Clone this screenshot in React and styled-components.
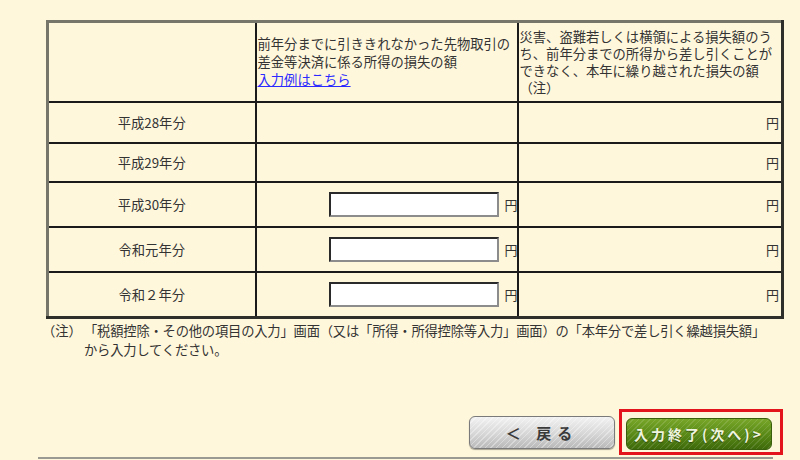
import React from 'react';
import styled, { createGlobalStyle, css } from 'styled-components';

const GlobalStyle = createGlobalStyle`
  html, body {
    margin: 0;
    padding: 0;
    background: #fff7dc;
  }
  body {
    font-family: "Noto Sans CJK JP", "Noto Sans", sans-serif;
    font-size: 13.3px;
    color: #333;
  }
`;

const Page = styled.div`
  width: 800px;
  height: 460px;
  overflow: hidden;
  padding-top: 20px;
  box-sizing: border-box;
`;

const Table = styled.table`
  margin-left: 46px;
  width: 735px;
  border-collapse: collapse;
  table-layout: fixed;
  border-style: solid;
  border-width: 3px;
  border-color: #76766a #2e2e2a #2e2e2a #76766a;
`;

const Cell = styled.td`
  border: 2px solid #1a1a1a;
  padding: 0 2px 0 2px;
  line-height: 17px;
  vertical-align: middle;
  height: ${(p) => p.h}px;
  text-align: ${(p) => p.align || 'left'};
  ${(p) =>
    p.head &&
    css`
      padding: 0 3px 0 1px;
    `}
  ${(p) =>
    p.amount &&
    css`
      padding-right: 0;
    `}
`;

const LinkedHead = styled.div`
  line-height: 18px;
`;

const Link = styled.a`
  color: #2b2bff;
  text-decoration: underline;
`;

const AmountWrap = styled.div`
  display: flex;
  align-items: center;
  justify-content: flex-end;
  gap: 5px;
  margin-right: -1px;
`;

const Input = styled.input`
  width: 170px;
  height: 25px;
  box-sizing: border-box;
  border-style: solid;
  border-width: 2px;
  border-color: #2a2a2a #8c8c8c #8c8c8c #2a2a2a;
  background: #fff;
  padding: 0 4px;
  font: inherit;
`;

const Yen = styled.span`
  font-size: 13px;
`;

const Note = styled.div`
  display: flex;
  margin: 2px 0 0 42px;
  width: 736px;
  line-height: 19px;
`;

const NoteLabel = styled.span`
  flex: 0 0 42px;
`;

const NoteText = styled.span`
  flex: 1;
  letter-spacing: -0.2px;
`;

const ButtonRow = styled.div`
  display: flex;
  justify-content: flex-end;
  align-items: center;
  gap: 4px;
  margin-top: 50px;
  width: 783px;
`;

const Button = styled.button`
  width: 146px;
  height: ${(p) => (p.variant === 'back' ? 33 : 32)}px;
  border-radius: 6px;
  font-family: "Noto Sans CJK JP", sans-serif;
  font-weight: bold;
  cursor: pointer;
  display: flex;
  align-items: center;
  justify-content: center;
  padding: 0;
  ${(p) =>
    p.variant === 'back'
      ? css`
          border: 1px solid #7a7a7a;
          color: #3a3a3a;
          font-size: 15px;
          letter-spacing: 6px;
          background:
            repeating-linear-gradient(135deg, rgba(255,255,255,0.35) 0 1px, rgba(255,255,255,0) 1px 4px),
            linear-gradient(#f2f2f2, #d6d6d6 55%, #b9b9b9);
          box-shadow: 0 1px 1px rgba(0, 0, 0, 0.35);
        `
      : css`
          border: 1px solid #3a5f0c;
          color: #eef4de;
          font-size: 14px;
          letter-spacing: 3px;
          text-shadow: 0 1px 1px rgba(0, 0, 0, 0.4);
          background:
            repeating-linear-gradient(135deg, rgba(255,255,255,0.12) 0 1px, rgba(255,255,255,0) 1px 4px),
            linear-gradient(#78a629, #5a8a17 50%, #3e6a0a);
        `}
`;

const Highlight = styled.div`
  border: 3px solid #e3141b;
  padding: 6px 8px 2px 4px;
`;

const Rule = styled.div`
  margin: 2px 0 0 38px;
  width: 735px;
  height: 2px;
  background: #9a9a92;
`;

const rows = [
  { label: '平成28年分', h: 39, input: false },
  { label: '平成29年分', h: 37, input: false },
  { label: '平成30年分', h: 43, input: true },
  { label: '令和元年分', h: 43, input: true },
  { label: '令和２年分', h: 43, input: true },
];

const App = () => {
  return (
    <Page>
      <GlobalStyle />
      <Table>
        <colgroup>
          <col style={{ width: 208 }} />
          <col style={{ width: 262 }} />
          <col style={{ width: 265 }} />
        </colgroup>
        <tbody>
          <tr>
            <Cell h={78} />
            <Cell h={78} head>
              <LinkedHead>
                前年分までに引ききれなかった先物取引の差金等決済に係る所得の損失の額
                <br />
                <Link href="#">入力例はこちら</Link>
              </LinkedHead>
            </Cell>
            <Cell h={78} head>
              災害、盗難若しくは横領による損失額のうち、前年分までの所得から差し引くことができなく、本年に繰り越された損失の額（注）
            </Cell>
          </tr>
          {rows.map((r) => (
            <tr key={r.label}>
              <Cell h={r.h} align="center">
                {r.label}
              </Cell>
              <Cell h={r.h} align="right" amount>
                {r.input && (
                  <AmountWrap>
                    <Input type="text" />
                    <Yen>円</Yen>
                  </AmountWrap>
                )}
              </Cell>
              <Cell h={r.h} align="right">
                <Yen>円</Yen>
              </Cell>
            </tr>
          ))}
        </tbody>
      </Table>
      <Note>
        <NoteLabel>（注）</NoteLabel>
        <NoteText>
          「税額控除・その他の項目の入力」画面（又は「所得・所得控除等入力」画面）の「本年分で差し引く繰越損失額」から入力してください。
        </NoteText>
      </Note>
      <ButtonRow>
        <Button variant="back">＜ 戻る</Button>
        <Highlight>
          <Button variant="next">入力終了(次へ)&gt;</Button>
        </Highlight>
      </ButtonRow>
      <Rule />
    </Page>
  );
};

export default App;
